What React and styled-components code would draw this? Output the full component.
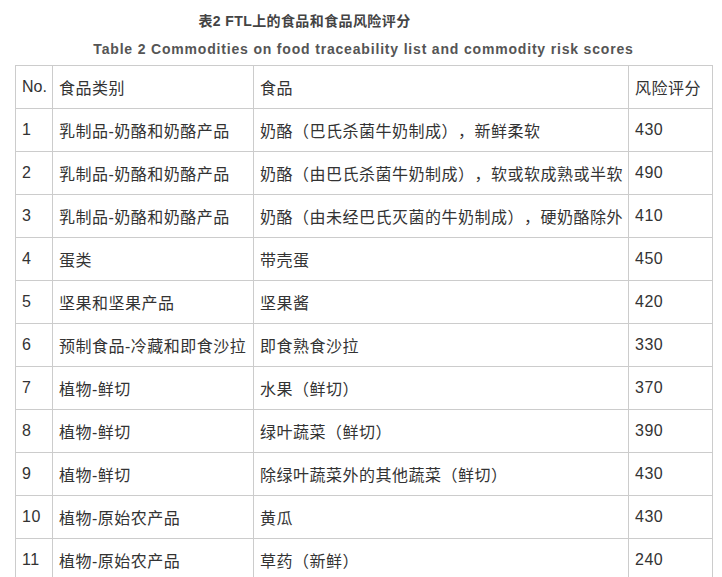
import React from "react";
import styled, { createGlobalStyle } from "styled-components";

const GlobalStyle = createGlobalStyle`
  html, body {
    margin: 0;
    padding: 0;
    background: #fff;
  }
  body {
    font-family: "Liberation Sans", Arial, "Noto Sans CJK SC", sans-serif;
    color: #333;
  }
`;

const rows = [
  ["1", "乳制品-奶酪和奶酪产品", "奶酪（巴氏杀菌牛奶制成），新鲜柔软", "430"],
  ["2", "乳制品-奶酪和奶酪产品", "奶酪（由巴氏杀菌牛奶制成），软或软成熟或半软", "490"],
  ["3", "乳制品-奶酪和奶酪产品", "奶酪（由未经巴氏灭菌的牛奶制成），硬奶酪除外", "410"],
  ["4", "蛋类", "带壳蛋", "450"],
  ["5", "坚果和坚果产品", "坚果酱", "420"],
  ["6", "预制食品-冷藏和即食沙拉", "即食熟食沙拉", "330"],
  ["7", "植物-鲜切", "水果（鲜切）", "370"],
  ["8", "植物-鲜切", "绿叶蔬菜（鲜切）", "390"],
  ["9", "植物-鲜切", "除绿叶蔬菜外的其他蔬菜（鲜切）", "430"],
  ["10", "植物-原始农产品", "黄瓜", "430"],
  ["11", "植物-原始农产品", "草药（新鲜）", "240"],
];

const Page = styled.div`
  padding: 11px 10px 0 15px;
`;

const Title = styled.h2`
  margin: 0;
  font-size: 14px;
  font-weight: bold;
  color: #444;
  text-align: center;
  line-height: 20px;
  padding-right: ${(p) => p.$shift || 0}px;
  letter-spacing: ${(p) => p.$spacing || 0}px;
`;

const Subtitle = styled(Title)`
  margin-top: 8px;
  color: #555;
`;

const Table = styled.table`
  margin-top: 6px;
  border-collapse: collapse;
  table-layout: fixed;
  width: 697px;
  font-size: 16px;
  color: #333;
  text-spacing-trim: space-all;
`;

const Cell = styled.td`
  border: 1px solid #ccc;
  height: 42px;
  padding: 0 6px;
  vertical-align: middle;
  white-space: nowrap;
  overflow: hidden;
  letter-spacing: ${(p) => (p.$narrow ? 0 : 0.5)}px;
  font-family: ${(p) =>
    p.$narrow
      ? `"Liberation Sans Narrow", "Liberation Sans", Arial, sans-serif`
      : `"Liberation Sans", Arial, "Noto Sans CJK SC", sans-serif`};
`;

export default function App() {
  return (
    <>
      <GlobalStyle />
      <Page>
        <Title $shift={118} $spacing={0.4}>表2 FTL上的食品和食品风险评分</Title>
        <Subtitle $spacing={0.82}>
          Table 2 Commodities on food traceability list and commodity risk scores
        </Subtitle>
        <Table>
          <colgroup>
            <col style={{ width: 37 }} />
            <col style={{ width: 201 }} />
            <col style={{ width: 375 }} />
            <col style={{ width: 84 }} />
          </colgroup>
          <tbody>
            <tr>
              <Cell $narrow>No.</Cell>
              <Cell>食品类别</Cell>
              <Cell>食品</Cell>
              <Cell>风险评分</Cell>
            </tr>
            {rows.map((r) => (
              <tr key={r[0]}>
                <Cell>{r[0]}</Cell>
                <Cell>{r[1]}</Cell>
                <Cell>{r[2]}</Cell>
                <Cell>{r[3]}</Cell>
              </tr>
            ))}
          </tbody>
        </Table>
      </Page>
    </>
  );
}
